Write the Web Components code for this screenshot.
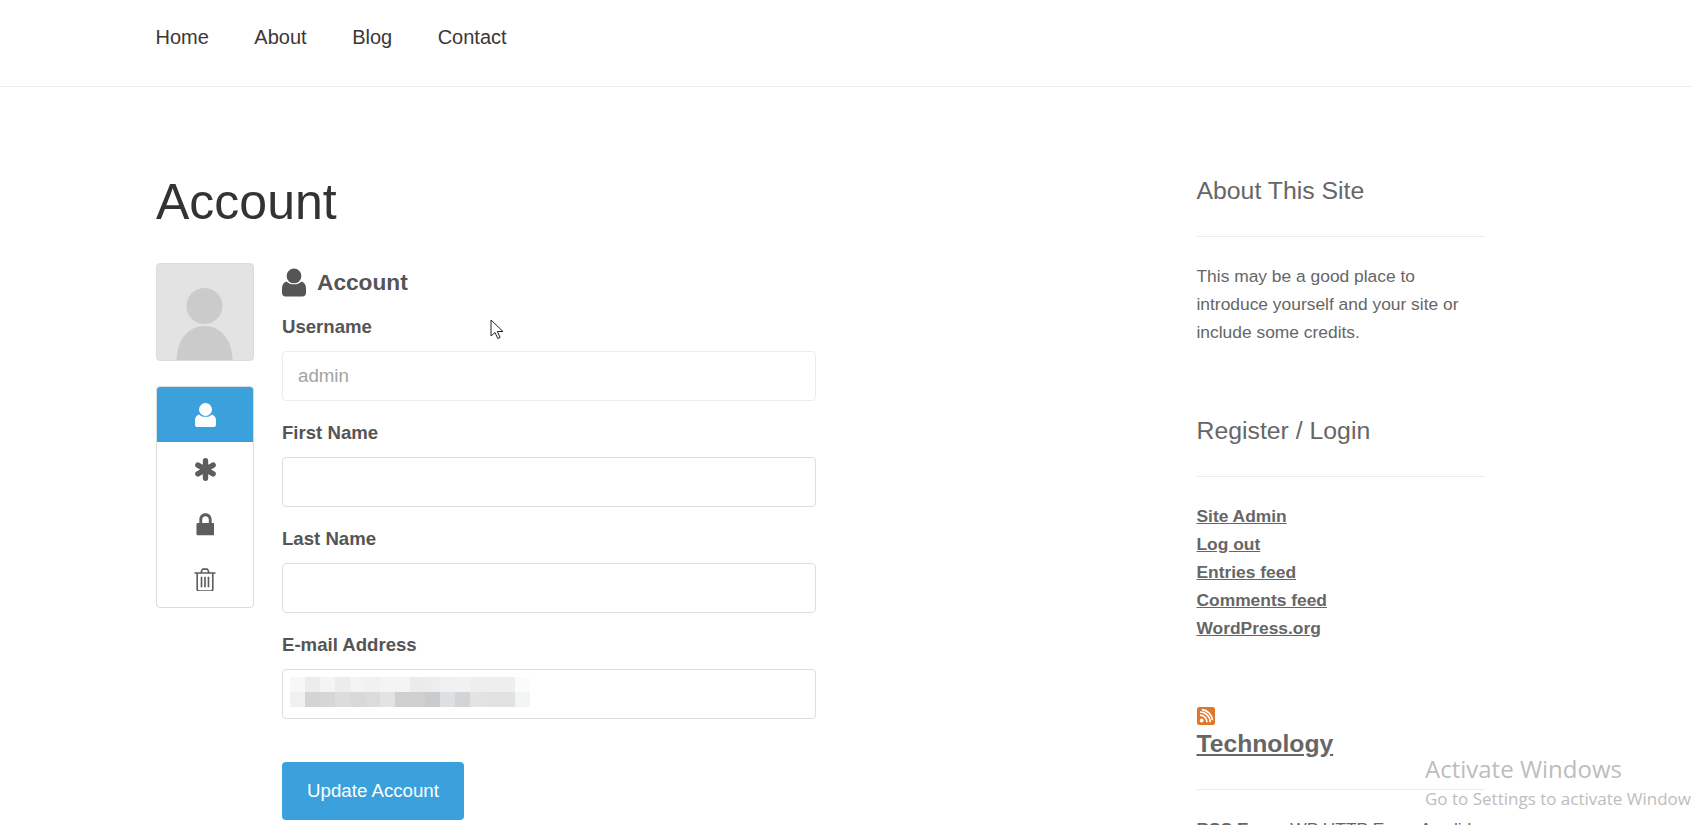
<!DOCTYPE html>
<html lang="en">
<head>
<meta charset="utf-8">
<title>Account</title>
<style>
  html, body { margin: 0; height: 825px; overflow: hidden; background: #fff; }
  body { position: relative; font-family: "Liberation Sans", Arial, sans-serif; color: #555; }
</style>
</head>
<body>
<site-nav>
  <a href="#">Home</a>
  <a href="#">About</a>
  <a href="#">Blog</a>
  <a href="#">Contact</a>
</site-nav>
<page-layout>
  <account-panel></account-panel>
  <site-sidebar slot="side"></site-sidebar>
</page-layout>
<desk-overlay></desk-overlay>

<script>
const ICONS = {
  user: '<svg viewBox="0 0 24 28" fill="currentColor"><circle cx="12" cy="7.400" r="7.400"/><path d="M4.500 13C6.500 15 9 15.800 12 15.800s5.500-.8 7.500-2.800C22.500 14 24 16.500 24 20v4.500c0 2-1.500 3.500-3.500 3.500h-17C1.500 28 0 26.500 0 24.500V20c0-3.500 1.500-6 4.500-7z"/></svg>',
  asterisk: '<svg viewBox="0 0 24 24" fill="none" stroke="currentColor" stroke-width="5.600" stroke-linecap="round"><path d="M12 2.800v18.400M4.030 7.400l15.940 9.200M4.030 16.600l15.940-9.200"/></svg>',
  lock: '<svg viewBox="0 0 20 24" fill="currentColor"><path fill-rule="evenodd" d="M3.500 10.500V7C3.500 3 6.300.3 10 .3S16.500 3 16.500 7v3.500H18c.8 0 1.500.7 1.500 1.500v10c0 .8-.7 1.500-1.500 1.500H2C1.200 23.500.5 22.800.5 22V12c0-.8.7-1.500 1.500-1.500zm3 0h7V7c0-2.100-1.500-3.700-3.500-3.700S6.500 4.900 6.500 7z"/></svg>',
  trash: '<svg viewBox="0 0 24 26" fill="none" stroke="currentColor" stroke-width="1.800"><path d="M.5 5.500h23M3.500 5.500V23c0 1.300.9 2.200 2 2.200h13c1.100 0 2-.9 2-2.200V5.500M7.500 5.500l1.300-3.300c.2-.6.700-1 1.300-1h3.800c.6 0 1.100.4 1.300 1l1.300 3.300M8.200 9.500v11.500M12 9.500v11.500M15.800 9.500v11.500"/></svg>',
  rss: '<svg viewBox="0 0 18 18"><rect width="18" height="18" rx="2.500" fill="#e0762a"/><circle cx="4.700" cy="13.500" r="1.900" fill="#fff"/><path d="M3 8.200a7 7 0 0 1 7 7M3 5a10.200 10.200 0 0 1 10.200 10.200M5 2.700a11.500 11.500 0 0 1 10.500 10.500" fill="none" stroke="#fff" stroke-width="1.700"/></svg>'
};

class SiteNav extends HTMLElement {
  constructor() {
    super();
    this.attachShadow({ mode: 'open' }).innerHTML = `
      <style>
        :host {
          display: flex;
          align-items: center;
          gap: 45.500px;
          height: 86px;
          padding: 0 0 0 155.500px;
          border-bottom: 1px solid #ececec;
          font-size: 20px;
        }
        ::slotted(a) { color: #3b3735; text-decoration: none; position: relative; top: -6px; }
      </style>
      <slot></slot>`;
  }
}

class PageLayout extends HTMLElement {
  constructor() {
    super();
    this.attachShadow({ mode: 'open' }).innerHTML = `
      <style>
        :host {
          display: grid;
          grid-template-columns: 1040.500px 288.500px;
          padding: 0 0 0 156px;
        }
        .main { min-width: 0; }
      </style>
      <div class="main"><slot></slot></div>
      <div><slot name="side"></slot></div>`;
  }
}

class AccountPanel extends HTMLElement {
  constructor() {
    super();
    this.attachShadow({ mode: 'open' }).innerHTML = `
      <style>
        :host { display: block; padding-top: 85px; }
        h1 {
          margin: 0 0 31px;
          font-size: 50px;
          line-height: 60px;
          font-weight: 400;
          color: #333;
        }
        .cols { display: flex; gap: 28px; align-items: flex-start; }
        .rail { width: 98px; display: flex; flex-direction: column; gap: 25px; }
        .form { width: 534px; }
        h2 {
          display: flex;
          align-items: center;
          gap: 11px;
          margin: 4px 0 17px;
          height: 30px;
          font-size: 22.700px;
          font-weight: 700;
          color: #555;
        }
        h2 svg { width: 24px; height: 29px; display: block; }
        form-field + form-field { margin-top: 19px; }
        .actions { margin-top: 43px; }
        button {
          width: 182px;
          height: 58px;
          border: 0;
          border-radius: 4px;
          background: #3aa1dc;
          color: #fff;
          font: 400 18.700px "Liberation Sans", Arial, sans-serif;
          cursor: pointer;
        }
      </style>
      <h1>Account</h1>
      <div class="cols">
        <div class="rail">
          <user-avatar></user-avatar>
          <account-tabs></account-tabs>
        </div>
        <div class="form">
          <h2>${ICONS.user}<span>Account</span></h2>
          <form-field label="Username" value="admin" disabled></form-field>
          <form-field label="First Name"></form-field>
          <form-field label="Last Name"></form-field>
          <form-field label="E-mail Address" blurred></form-field>
          <div class="actions"><button type="button">Update Account</button></div>
        </div>
      </div>`;
  }
}

class UserAvatar extends HTMLElement {
  constructor() {
    super();
    this.attachShadow({ mode: 'open' }).innerHTML = `
      <style>
        :host {
          display: block;
          box-sizing: border-box;
          height: 98px;
          border: 1px solid #dcdcdc;
          border-radius: 4px;
          background: #e3e3e3;
          overflow: hidden;
        }
        svg { display: block; width: 100%; height: 100%; }
      </style>
      <svg viewBox="0 0 96 96" fill="#cbcbcb">
        <circle cx="47.500" cy="42" r="18"/>
        <path d="M19.500 96C20 75 32 62 47.500 62S75 75 75.500 96z"/>
      </svg>`;
  }
}

class AccountTabs extends HTMLElement {
  constructor() {
    super();
    const tabs = [
      { icon: 'user', w: 21, h: 24, active: true },
      { icon: 'asterisk', w: 23, h: 24 },
      { icon: 'lock', w: 19, h: 23 },
      { icon: 'trash', w: 22, h: 24 },
    ];
    this.attachShadow({ mode: 'open' }).innerHTML = `
      <style>
        :host {
          display: block;
          box-sizing: border-box;
          border: 1px solid #dcdcdc;
          border-radius: 4px;
          overflow: hidden;
          color: #5d5d5d;
        }
        .tab { height: 55px; display: flex; align-items: center; justify-content: center; }
        .tab.active { background: #3aa1dc; color: #fff; }
        .tab svg { display: block; }
      </style>
      ${tabs.map((t) => `
        <div class="tab${t.active ? ' active' : ''}">
          <span style="width:${t.w}px;height:${t.h}px;display:block">${ICONS[t.icon]}</span>
        </div>`).join('')}`;
  }
}

class FormField extends HTMLElement {
  constructor() {
    super();
    this.attachShadow({ mode: 'open' });
  }

  connectedCallback() {
    const disabled = this.hasAttribute('disabled');
    const cells = [
      ['#f7f7f5','#ececec','#f4f4f4','#ececec','#f3f3f3','#f1f1f1','#f4f4f4','#f4f4f4','#ebebeb','#ededed','#f0f0f0','#f1f1f1','#eeeeee','#eeeeee','#eeeeee','#fbfbfb'],
      ['#f0f0f0','#d4d4d4','#d6d6d6','#dcdcdc','#d8d8d8','#dbdbdb','#e3e3e3','#cfcfcf','#cfcfcf','#cbcbcb','#dde0e2','#d4d4d4','#e3e3e3','#e2e2e2','#e2e2e2','#f1f5f5'],
    ];
    this.shadowRoot.innerHTML = `
      <style>
        :host { display: block; }
        label {
          display: block;
          font-size: 18.600px;
          line-height: 26px;
          font-weight: 700;
          color: #555;
          margin-bottom: 11px;
        }
        .wrap { position: relative; }
        input {
          display: block;
          box-sizing: border-box;
          width: 100%;
          height: 50px;
          padding: 0 15px;
          border: 1px solid #dedede;
          border-radius: 4px;
          background: #fff;
          font: 400 18.700px "Liberation Sans", Arial, sans-serif;
          color: #a3a3a3;
          outline: 0;
        }
        input:disabled { border-color: #ececec; }
        .blur {
          position: absolute;
          left: 8px;
          top: 8px;
          display: grid;
          grid-template-columns: repeat(16, 15px);
          grid-auto-rows: 15px;
        }
      </style>
      <label>${this.getAttribute('label')}</label>
      <div class="wrap">
        <input type="text" value="${this.getAttribute('value') || ''}" ${disabled ? 'disabled' : ''}>
        ${this.hasAttribute('blurred') ? `<div class="blur">${cells.flat().map((c) => `<i style="background:${c}"></i>`).join('')}</div>` : ''}
      </div>`;
  }
}

class SideWidget extends HTMLElement {
  constructor() {
    super();
    this.attachShadow({ mode: 'open' }).innerHTML = `
      <style>
        :host { display: block; }
        .head {
          font-size: 24.800px;
          line-height: 30px;
          color: #666;
          padding-bottom: 30px;
          border-bottom: 1px solid #ececec;
          margin-bottom: 25px;
        }
      </style>
      <div class="head"><slot name="head"></slot></div>
      <slot></slot>`;
  }
}

class SiteSidebar extends HTMLElement {
  constructor() {
    super();
    const links = ['Site Admin', 'Log out', 'Entries feed', 'Comments feed', 'WordPress.org'];
    this.attachShadow({ mode: 'open' }).innerHTML = `
      <style>
        :host {
          display: block;
          padding-top: 89px;
          font-size: 17.400px;
          line-height: 28px;
          color: #666;
        }
        .reg { margin-top: 70px; }
        .feed { margin-top: 60px; }
        p { margin: 0; }
        .links a { display: block; font-weight: 700; color: #666; }
        .rss { display: block; width: 18px; height: 18px; margin-bottom: 9px; }
        .tech { display: block; font-size: 24.700px; font-weight: 700; line-height: 30px; color: #666; }
      </style>
      <side-widget>
        <span slot="head">About This Site</span>
        <p>This may be a good place to introduce yourself and your site or include some credits.</p>
      </side-widget>
      <side-widget class="reg">
        <span slot="head">Register / Login</span>
        <div class="links">${links.map((l) => `<a href="#">${l}</a>`).join('')}</div>
      </side-widget>
      <side-widget class="feed">
        <span slot="head">
          <span class="rss">${ICONS.rss}</span>
          <a class="tech" href="#">Technology</a>
        </span>
        <div><b>RSS Error:</b> WP HTTP Error: A valid URL was not provided.</div>
      </side-widget>`;
  }
}

class DeskOverlay extends HTMLElement {
  constructor() {
    super();
    this.attachShadow({ mode: 'open' }).innerHTML = `
      <style>
        :host {
          position: absolute;
          inset: 0;
          pointer-events: none;
          overflow: hidden;
          font-family: "Open Sans", sans-serif;
          color: #bdbdbd;
        }
        .mark { position: absolute; left: 1425px; top: 753px; white-space: nowrap; }
        .t1 { font-size: 24px; line-height: 32px; }
        .t2 { font-size: 17px; line-height: 22px; margin-top: 3px; }
        svg { position: absolute; left: 490px; top: 319px; width: 14px; height: 21px; }
      </style>
      <svg viewBox="0 0 14 21"><path d="M1 1v16l4-3.500 2.800 6 2.300-1-2.800-6H13z" fill="#fff" stroke="#222" stroke-width="1"/></svg>
      <div class="mark">
        <div class="t1">Activate Windows</div>
        <div class="t2">Go to Settings to activate Windows.</div>
      </div>`;
  }
}

customElements.define('site-nav', SiteNav);
customElements.define('page-layout', PageLayout);
customElements.define('user-avatar', UserAvatar);
customElements.define('account-tabs', AccountTabs);
customElements.define('form-field', FormField);
customElements.define('account-panel', AccountPanel);
customElements.define('side-widget', SideWidget);
customElements.define('site-sidebar', SiteSidebar);
customElements.define('desk-overlay', DeskOverlay);
</script>
</body>
</html>
